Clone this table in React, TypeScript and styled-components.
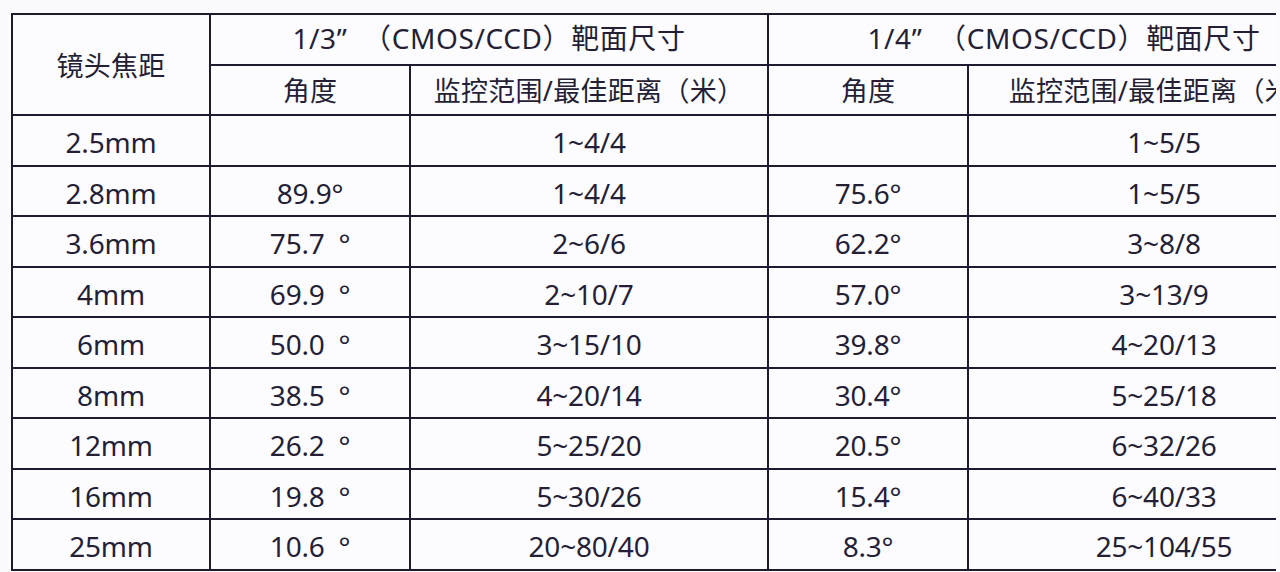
import React from "react";
import styled, { createGlobalStyle } from "styled-components";

const GlobalStyle = createGlobalStyle`
  html, body {
    margin: 0;
    padding: 0;
    background: #fbfbfd;
  }
  body {
    font-family: "Noto Sans", "Noto Sans CJK SC", sans-serif;
    color: #251f36;
  }
`;

const Page = styled.div`
  width: 1280px;
  height: 572px;
  box-sizing: border-box;
  padding: 13px 0 0 11px;
  overflow: hidden;
  background: #fbfbfd;
`;

const Clip = styled.div`
  width: 1265px;
  overflow: hidden;
`;

const Table = styled.table`
  border-collapse: collapse;
  table-layout: fixed;
  width: 1350px;
  background: #fcfcfe;
`;

const Cell = styled.td<{ $head?: boolean }>`
  border: 2px solid #1f1a2f;
  height: ${(p) => (p.$head ? "46.5px" : "45px")};
  padding: ${(p) => (p.$head ? "2px 0 0" : "3.5px 0 0")};
  text-align: center;
  vertical-align: middle;
  font-family: "Noto Sans", "Noto Sans CJK SC", sans-serif;
  font-weight: 400;
  font-size: ${(p) => (p.$head ? "27px" : "28px")};
  line-height: 1;
  color: #251f36;
  white-space: nowrap;
  overflow: hidden;
  letter-spacing: ${(p) => (p.$head ? "0.3px" : "-0.2px")};
`;

const GroupCell = styled(Cell)`
  padding: 0 0 2px;
  font-size: 28px;
  letter-spacing: 0.6px;
`;

type Row = [string, string, string, string, string];

const rows: Row[] = [
  ["2.5mm", "", "1~4/4", "", "1~5/5"],
  ["2.8mm", "89.9°", "1~4/4", "75.6°", "1~5/5"],
  ["3.6mm", "75.7\u2002°", "2~6/6", "62.2°", "3~8/8"],
  ["4mm", "69.9\u2002°", "2~10/7", "57.0°", "3~13/9"],
  ["6mm", "50.0\u2002°", "3~15/10", "39.8°", "4~20/13"],
  ["8mm", "38.5\u2002°", "4~20/14", "30.4°", "5~25/18"],
  ["12mm", "26.2\u2002°", "5~25/20", "20.5°", "6~32/26"],
  ["16mm", "19.8\u2002°", "5~30/26", "15.4°", "6~40/33"],
  ["25mm", "10.6\u2002°", "20~80/40", "8.3°", "25~104/55"],
];

const colWidths = [198, 200, 358, 200, 392];

export default function App() {
  return (
    <>
      <GlobalStyle />
      <Page>
        <Clip>
          <Table>
            <colgroup>
              {colWidths.map((w, i) => (
                <col key={i} style={{ width: w }} />
              ))}
            </colgroup>
            <thead>
              <tr>
                <Cell as="th" $head rowSpan={2}>
                  镜头焦距
                </Cell>
                <GroupCell as="th" $head colSpan={2}>
                  1/3”&nbsp;&nbsp;（CMOS/CCD）靶面尺寸
                </GroupCell>
                <GroupCell as="th" $head colSpan={2}>
                  1/4”&nbsp;&nbsp;（CMOS/CCD）靶面尺寸
                </GroupCell>
              </tr>
              <tr>
                <Cell as="th" $head>角度</Cell>
                <Cell as="th" $head>监控范围/最佳距离（米）</Cell>
                <Cell as="th" $head>角度</Cell>
                <Cell as="th" $head>监控范围/最佳距离（米）</Cell>
              </tr>
            </thead>
            <tbody>
              {rows.map((r) => (
                <tr key={r[0]}>
                  {r.map((c, i) => (
                    <Cell key={i}>{c}</Cell>
                  ))}
                </tr>
              ))}
            </tbody>
          </Table>
        </Clip>
      </Page>
    </>
  );
}
